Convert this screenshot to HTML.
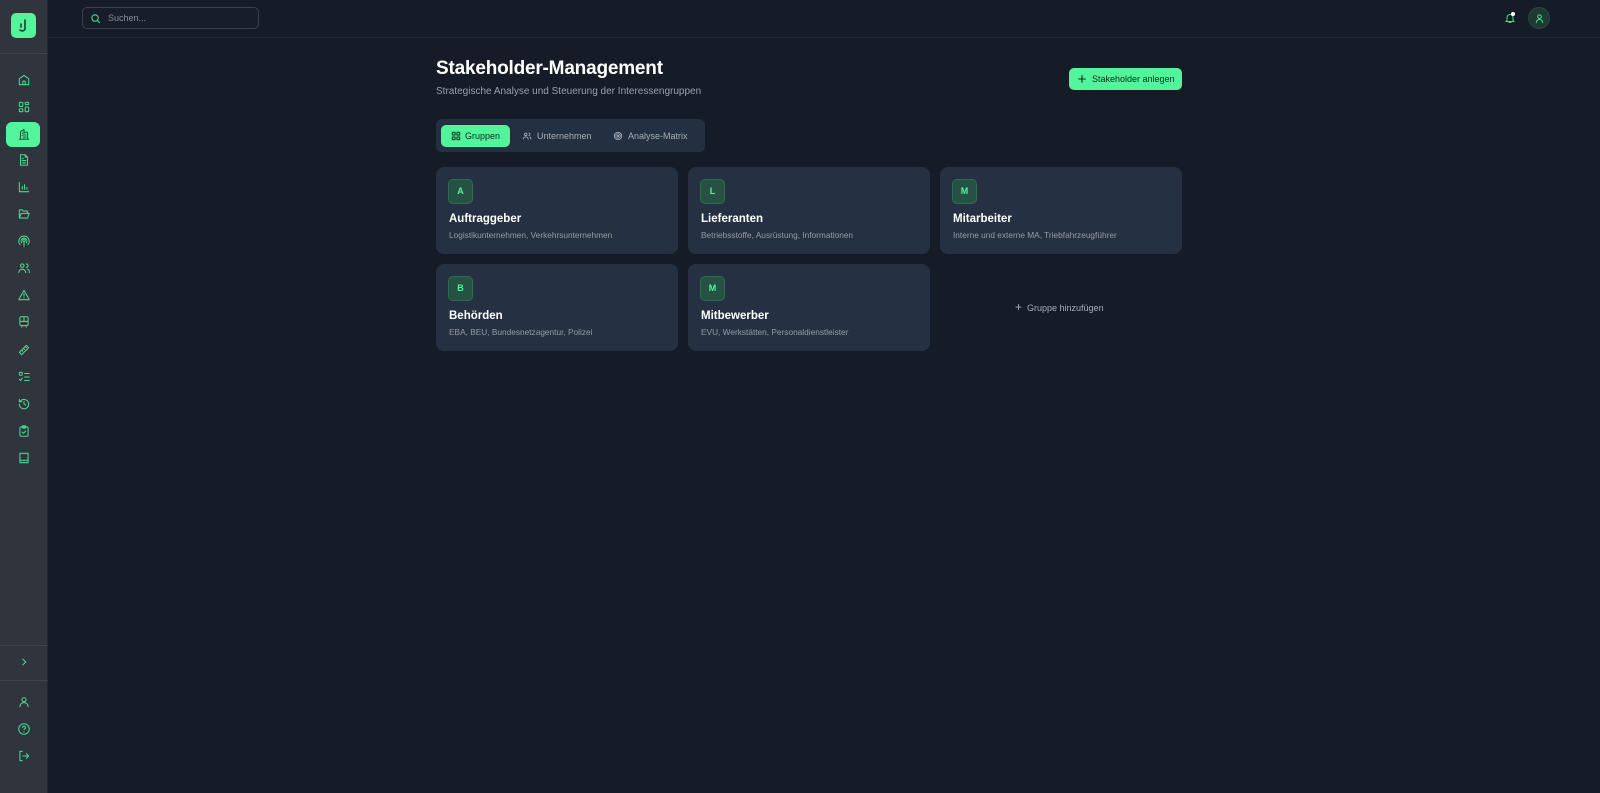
<!DOCTYPE html>
<html><head><meta charset="utf-8"><style>
*{box-sizing:border-box;margin:0;padding:0}
body{width:1600px;height:793px;background:#161c27;font-family:"Liberation Sans",sans-serif;position:relative;overflow:hidden}
.sb{position:absolute;left:0;top:0;width:48px;height:793px;background:#2f343d;border-right:1px solid #222936}
.logo{position:absolute;left:11px;top:13px;width:25px;height:25px;background:#52f59c;border-radius:5px}
.hr{position:absolute;left:0;width:48px;height:1px;background:#3d434c}
.ic{position:absolute;left:17px;width:14px;height:14px}
.ic svg{width:14px;height:14px;fill:none;stroke:#48d88a;stroke-width:1.8;stroke-linecap:round;stroke-linejoin:round}
.act{position:absolute;left:6px;top:122px;width:34px;height:25px;background:#52f59c;border-radius:6px}
.top{position:absolute;left:48px;top:0;right:0;height:38px;border-bottom:1px solid #222a35}
.search{position:absolute;left:82px;top:7px;width:177px;height:22px;border:1px solid #3a414b;border-radius:5px;background:#181e29;color:#8a9099;font-size:9px;line-height:20px;padding-left:25px}
h1{position:absolute;left:436px;top:58px;color:#fff;font-size:19px;font-weight:bold;letter-spacing:-.2px}
.sub{position:absolute;left:436px;top:86px;color:#9aa1ab;font-size:10px}
.btn{position:absolute;left:1069px;top:68px;width:113px;height:22px;background:#52f59c;border-radius:5px;font-size:9px;color:#0d2a1a;line-height:22px;padding-left:23px}
.tabs{position:absolute;left:436px;top:119px;width:269px;height:33px;background:#233041;border-radius:6px}
.tab{position:absolute;top:6px;height:22px;font-size:9px;line-height:22px;color:#a7aeb8}
.card{position:absolute;width:242px;height:87px;background:#253142;border-radius:8px}
.bd{position:absolute;left:12px;top:12px;width:25px;height:25px;background:#265243;border:1px solid #2f6a52;border-radius:5px;color:#52f59c;font-size:9px;font-weight:bold;text-align:center;line-height:23px}
.ct{position:absolute;left:13px;top:46px;color:#fff;font-size:11.5px;font-weight:bold}
.cd{position:absolute;left:13px;top:63px;color:#959ca6;font-size:8.3px}
</style></head><body>
<div class="sb">
<div class="logo"><svg width="25" height="25" viewBox="0 0 25 25" fill="none" stroke="#12422a" stroke-width="1.6" stroke-linecap="round"><path d="M14 7v9a3 3 0 0 1-5 1"/><path d="M10 11v3"/></svg></div>
<div class="hr" style="top:53px"></div>
<div class="act"></div>
<div class="ic" style="top:73px"><svg viewBox="0 0 24 24"><path d="M4 10l8-6 8 6v10H4z"/><path d="M10 20v-6h4v6"/></svg></div>
<div class="ic" style="top:100px"><svg viewBox="0 0 24 24"><rect x="4" y="4" width="6" height="7" rx="1"/><rect x="14" y="4" width="6" height="4" rx="1"/><rect x="4" y="15" width="6" height="5" rx="1"/><rect x="14" y="12" width="6" height="8" rx="1"/></svg></div>
<div class="ic" style="top:127px"><svg viewBox="0 0 24 24" style="stroke:#1d5a3a"><path d="M6 21V8l6-4v17M12 9h6v12M4 21h16M9 10v1M9 14v1M15 13v1M15 17v1"/></svg></div>
<div class="ic" style="top:153px"><svg viewBox="0 0 24 24"><path d="M14 3H6v18h12V7z"/><path d="M14 3v4h4M9 13h6M9 17h6M9 9h2"/></svg></div>
<div class="ic" style="top:180px"><svg viewBox="0 0 24 24"><path d="M4 4v16h16M9 16v-5M13 16V8M17 16v-3"/></svg></div>
<div class="ic" style="top:207px"><svg viewBox="0 0 24 24"><path d="M4 19V5h5l2 2h7v3M4 19l3-8h14l-3 8z"/></svg></div>
<div class="ic" style="top:234px"><svg viewBox="0 0 24 24"><circle cx="12" cy="11" r="2"/><path d="M8 15a5 5 0 1 1 8 0M5 18a9 9 0 1 1 14 0M12 13v8"/></svg></div>
<div class="ic" style="top:261px"><svg viewBox="0 0 24 24"><circle cx="9" cy="8" r="3"/><path d="M3 20a6 6 0 0 1 12 0M16 5a3 3 0 0 1 0 6M18 14a5 5 0 0 1 3 6"/></svg></div>
<div class="ic" style="top:288px"><svg viewBox="0 0 24 24"><path d="M12 4l9 16H3z"/><path d="M12 10v4M12 17v.5"/></svg></div>
<div class="ic" style="top:315px"><svg viewBox="0 0 24 24"><rect x="5" y="3" width="14" height="15" rx="2"/><path d="M5 11h14M12 3v8M8 21l2-3M16 21l-2-3"/></svg></div>
<div class="ic" style="top:343px"><svg viewBox="0 0 24 24"><path d="M4 16L16 4l4 4L8 20z"/><path d="M8 12l2 2M11 9l2 2M14 6l2 2"/></svg></div>
<div class="ic" style="top:370px"><svg viewBox="0 0 24 24"><rect x="4" y="4" width="5" height="5" rx="1"/><path d="M4 16l2 2 3-4M13 6h8M13 12h8M13 18h8"/></svg></div>
<div class="ic" style="top:397px"><svg viewBox="0 0 24 24"><path d="M4 12a8 8 0 1 0 3-6L4 8M4 4v4h4M12 8v4l3 2"/></svg></div>
<div class="ic" style="top:424px"><svg viewBox="0 0 24 24"><rect x="5" y="5" width="14" height="16" rx="2"/><rect x="9" y="3" width="6" height="4" rx="1"/><path d="M9 14l2 2 4-4"/></svg></div>
<div class="ic" style="top:451px"><svg viewBox="0 0 24 24"><path d="M5 4h14v16H5zM5 16h14"/></svg></div>
<div class="hr" style="top:645px"></div>
<div class="ic" style="top:655px"><svg viewBox="0 0 24 24"><path d="M10 7l5 5-5 5"/></svg></div>
<div class="hr" style="top:680px"></div>
<div class="ic" style="top:695px"><svg viewBox="0 0 24 24"><circle cx="12" cy="8" r="3.5"/><path d="M5 20a7 7 0 0 1 14 0"/></svg></div>
<div class="ic" style="top:722px"><svg viewBox="0 0 24 24"><circle cx="12" cy="12" r="9"/><path d="M9.5 9.5a2.5 2.5 0 1 1 3.5 2.3c-.6.3-1 .8-1 1.5M12 17v.5"/></svg></div>
<div class="ic" style="top:749px"><svg viewBox="0 0 24 24"><path d="M9 4H5v16h4M10 12h10M16 8l4 4-4 4"/></svg></div>
</div>
<div class="top"></div>
<div class="search"><svg style="position:absolute;left:7px;top:5px" width="11" height="11" viewBox="0 0 24 24" fill="none" stroke="#48d88a" stroke-width="2.4" stroke-linecap="round"><circle cx="11" cy="11" r="7"/><path d="M16 16l5 5"/></svg>Suchen...</div>
<svg style="position:absolute;left:1504px;top:12px" width="12" height="12" viewBox="0 0 24 24" fill="none" stroke="#48d88a" stroke-width="2" stroke-linecap="round"><path d="M6 17V11a6 6 0 0 1 12 0v6l2 2H4zM10 21h4"/></svg>
<div style="position:absolute;left:1511px;top:12px;width:4px;height:4px;border-radius:50%;background:#fff"></div>
<div style="position:absolute;left:1528px;top:7px;width:22px;height:22px;border-radius:50%;background:#1e3a33;border:1px solid #27483d"><svg style="position:absolute;left:5px;top:5px" width="11" height="11" viewBox="0 0 24 24" fill="none" stroke="#48d88a" stroke-width="2.2" stroke-linecap="round"><circle cx="12" cy="8" r="4"/><path d="M5 21a7 7 0 0 1 14 0"/></svg></div>
<h1>Stakeholder-Management</h1>
<div class="sub">Strategische Analyse und Steuerung der Interessengruppen</div>
<div class="btn"><svg style="position:absolute;left:8px;top:6px" width="10" height="10" viewBox="0 0 24 24" fill="none" stroke="#0d2a1a" stroke-width="2.6" stroke-linecap="round"><path d="M12 4v16M4 12h16"/></svg>Stakeholder anlegen</div>
<div class="tabs">
<div class="tab" style="left:5px;width:69px;background:#52f59c;border-radius:5px;color:#0d2a1a;padding-left:24px"><svg style="position:absolute;left:10px;top:6px" width="10" height="10" viewBox="0 0 24 24" fill="none" stroke="#0d2a1a" stroke-width="2.4"><rect x="3" y="3" width="7" height="7" rx="2"/><rect x="14" y="3" width="7" height="7" rx="2"/><rect x="3" y="14" width="7" height="7" rx="2"/><rect x="14" y="14" width="7" height="7" rx="2"/></svg>Gruppen</div>
<div class="tab" style="left:86px;padding-left:15px"><svg style="position:absolute;left:0;top:6px" width="10" height="10" viewBox="0 0 24 24" fill="none" stroke="#a7aeb8" stroke-width="2"><circle cx="9" cy="8" r="3"/><path d="M3 20a6 6 0 0 1 12 0M16 5a3 3 0 0 1 0 6M18 14a5 5 0 0 1 3 6"/></svg>Unternehmen</div>
<div class="tab" style="left:177px;padding-left:15px"><svg style="position:absolute;left:0;top:6px" width="10" height="10" viewBox="0 0 24 24" fill="none" stroke="#a7aeb8" stroke-width="2"><circle cx="12" cy="12" r="9"/><circle cx="12" cy="12" r="5.5"/><circle cx="12" cy="12" r="2"/></svg>Analyse-Matrix</div>
</div>
<div class="card" style="left:436px;top:167px"><div class="bd">A</div><div class="ct">Auftraggeber</div><div class="cd">Logistikunternehmen, Verkehrsunternehmen</div></div>
<div class="card" style="left:688px;top:167px"><div class="bd">L</div><div class="ct">Lieferanten</div><div class="cd">Betriebsstoffe, Ausrüstung, Informationen</div></div>
<div class="card" style="left:940px;top:167px"><div class="bd">M</div><div class="ct">Mitarbeiter</div><div class="cd">Interne und externe MA, Triebfahrzeugführer</div></div>
<div class="card" style="left:436px;top:264px"><div class="bd">B</div><div class="ct">Behörden</div><div class="cd">EBA, BEU, Bundesnetzagentur, Polizei</div></div>
<div class="card" style="left:688px;top:264px"><div class="bd">M</div><div class="ct">Mitbewerber</div><div class="cd">EVU, Werkstätten, Personaldienstleister</div></div>
<div style="position:absolute;left:1015px;top:300px;color:#a7aeb8;font-size:9px"><span style="font-size:12px;margin-right:5px">+</span>Gruppe hinzufügen</div>
</body></html>
